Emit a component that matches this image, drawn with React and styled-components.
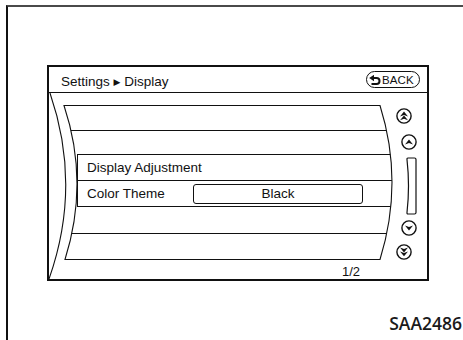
import React from "react";
import styled, { createGlobalStyle } from "styled-components";

const GlobalStyle = createGlobalStyle`
  html, body { margin: 0; padding: 0; background: #fff; }
  body { font-family: "Liberation Sans", Arial, sans-serif; color: #111; }
`;

const Page = styled.div`
  width: 463px;
  height: 340px;
  box-sizing: border-box;
  padding: 5px 0 0 6px;
  display: flex;
  overflow: hidden;
`;

const Frame = styled.div`
  flex: 1;
  display: flex;
  flex-direction: column;
  border-top: 2px solid #4a4a4a;
  border-left: 2px solid #111;
  padding: 58px 1px 0 39px;
`;

const Screen = styled.div`
  width: 382px;
  height: 216px;
  box-sizing: border-box;
  border: 2px solid #111;
  display: flex;
  flex-direction: column;
`;

const Header = styled.div`
  height: 26px;
  box-sizing: border-box;
  border-bottom: 1px solid #111;
  display: flex;
  align-items: flex-start;
  justify-content: space-between;
  padding: 0 7px 0 12px;
`;

const Title = styled.div`
  font-size: 13.5px;
  line-height: 16px;
  margin-top: 7px;
  white-space: pre;
`;

const Crumb = styled.span`
  font-family: "DejaVu Sans", sans-serif;
  font-size: 9px;
  position: relative;
  top: -1px;
`;

const BackButton = styled.div`
  margin-top: 4px;
  height: 17px;
  width: 54px;
  box-sizing: border-box;
  border: 1.5px solid #111;
  border-radius: 9px;
  display: flex;
  align-items: center;
  gap: 1px;
  padding-left: 2px;
  font-size: 11.5px;
  letter-spacing: 0.1px;
`;

const Body = styled.div`
  flex: 1;
  display: flex;
`;

const Main = styled.div`
  position: relative;
  width: 346px;
  display: flex;
  flex-direction: column;
`;

const Outline = styled.svg`
  position: absolute;
  left: 0;
  top: 0;
  width: 346px;
  height: 186px;
  pointer-events: none;
  z-index: 2;
`;

const List = styled.div`
  margin-top: 12px;
  height: 154px;
  display: flex;
  flex-direction: column;
  clip-path: path("M15 0 L331 0 Q355 77 331 154 L16 154 Q40.5 77 15 0 Z");
`;

const Row = styled.div`
  height: ${(p) => p.$h}px;
  box-sizing: border-box;
  margin-left: ${(p) => (p.$indent ? 28 : 0)}px;
  border-left: ${(p) => (p.$indent ? "1px solid #111" : "none")};
  border-top: ${(p) => (p.$top ? "1px solid #111" : "none")};
  border-bottom: ${(p) => (p.$bottom ? "1px solid #111" : "none")};
  display: flex;
  align-items: center;
  padding-left: 9px;
  font-size: 13.5px;
`;

const Label = styled.span`
  width: 106px;
  flex: none;
`;

const ValueBox = styled.div`
  width: 170px;
  height: 20px;
  box-sizing: border-box;
  border: 1.6px solid #111;
  border-radius: 3px;
  display: flex;
  align-items: center;
  justify-content: center;
  font-size: 13.5px;
`;

const Footer = styled.div`
  display: flex;
  justify-content: flex-end;
  padding: 6px 35px 0 0;
  font-size: 13px;
  line-height: 13px;
`;

const Side = styled.div`
  width: 32px;
  display: flex;
  flex-direction: column;
  padding-top: 15px;
`;

const SideItem = styled.div`
  margin-left: ${(p) => p.$x}px;
  margin-top: ${(p) => p.$mt}px;
  display: flex;
`;

const Caption = styled.div`
  align-self: flex-end;
  margin-top: 34px;
  font-family: "Open Sans", "Liberation Sans", sans-serif;
  font-weight: 600;
  font-size: 17.5px;
  line-height: 17.5px;
  color: #1a1a1a;
`;

function BackIcon() {
  return (
    <svg width="12" height="10" viewBox="0 0 12 10">
      <path d="M0.2 3 L5 -0.2 L5 6.2 Z" fill="#111" />
      <path
        d="M4 3 H7.5 A3 3 0 0 1 7.5 9 H2.5"
        fill="none"
        stroke="#111"
        strokeWidth="2"
      />
    </svg>
  );
}

function Arrow({ y, down }) {
  const d = down
    ? `M4 ${y - 2.4} L8 ${y + 2.4} L12 ${y - 2.4} L8 ${y - 0.9} Z`
    : `M4 ${y + 2.4} L8 ${y - 2.4} L12 ${y + 2.4} L8 ${y + 0.9} Z`;
  return <path d={d} fill="#111" />;
}

function ScrollButton({ down, double }) {
  return (
    <svg width="16" height="16" viewBox="0 0 16 16">
      <circle cx="8" cy="8" r="7.1" fill="none" stroke="#111" strokeWidth="1.4" />
      {double ? (
        <>
          <Arrow y={6} down={down} />
          <Arrow y={9.8} down={down} />
        </>
      ) : (
        <Arrow y={8} down={down} />
      )}
    </svg>
  );
}

function ScrollBar() {
  return (
    <svg width="12" height="58" viewBox="0 0 12 58">
      <path
        d="M3 1 H9.5 Q11 1 11 2.5 V55.5 Q11 57 9.5 57 H3 Q1.8 57 2 55.5 Q5 29 2 2.5 Q1.8 1 3 1 Z"
        fill="none"
        stroke="#111"
        strokeWidth="1.2"
      />
    </svg>
  );
}

export default function App() {
  return (
    <>
      <GlobalStyle />
      <Page>
        <Frame>
          <Screen>
            <Header>
              <Title>
                Settings <Crumb>▶</Crumb> Display
              </Title>
              <BackButton>
                <BackIcon />
                <span>BACK</span>
              </BackButton>
            </Header>
            <Body>
              <Main>
                <Outline viewBox="0 0 346 186">
                  <path d="M1 0 Q33 93 0 186" fill="none" stroke="#111" strokeWidth="1.1" />
                  <path
                    d="M15 12.5 L331 12.5 Q355 89 331 166.5 L16 166.5 Q40.5 89 15 12.5 Z"
                    fill="none"
                    stroke="#111"
                    strokeWidth="1.1"
                  />
                </Outline>
                <List>
                  <Row $h={26} $bottom />
                  <Row $h={23} />
                  <Row $h={27} $indent $top $bottom>
                    Display Adjustment
                  </Row>
                  <Row $h={26} $indent $bottom>
                    <Label>Color Theme</Label>
                    <ValueBox>Black</ValueBox>
                  </Row>
                  <Row $h={27} $bottom />
                  <Row $h={25} />
                </List>
                <Footer>1/2</Footer>
              </Main>
              <Side>
                <SideItem $x={1} $mt={0}>
                  <ScrollButton double />
                </SideItem>
                <SideItem $x={6} $mt={10}>
                  <ScrollButton />
                </SideItem>
                <SideItem $x={10} $mt={7}>
                  <ScrollBar />
                </SideItem>
                <SideItem $x={6} $mt={5}>
                  <ScrollButton down />
                </SideItem>
                <SideItem $x={1} $mt={8}>
                  <ScrollButton down double />
                </SideItem>
              </Side>
            </Body>
          </Screen>
          <Caption>SAA2486</Caption>
        </Frame>
      </Page>
    </>
  );
}
